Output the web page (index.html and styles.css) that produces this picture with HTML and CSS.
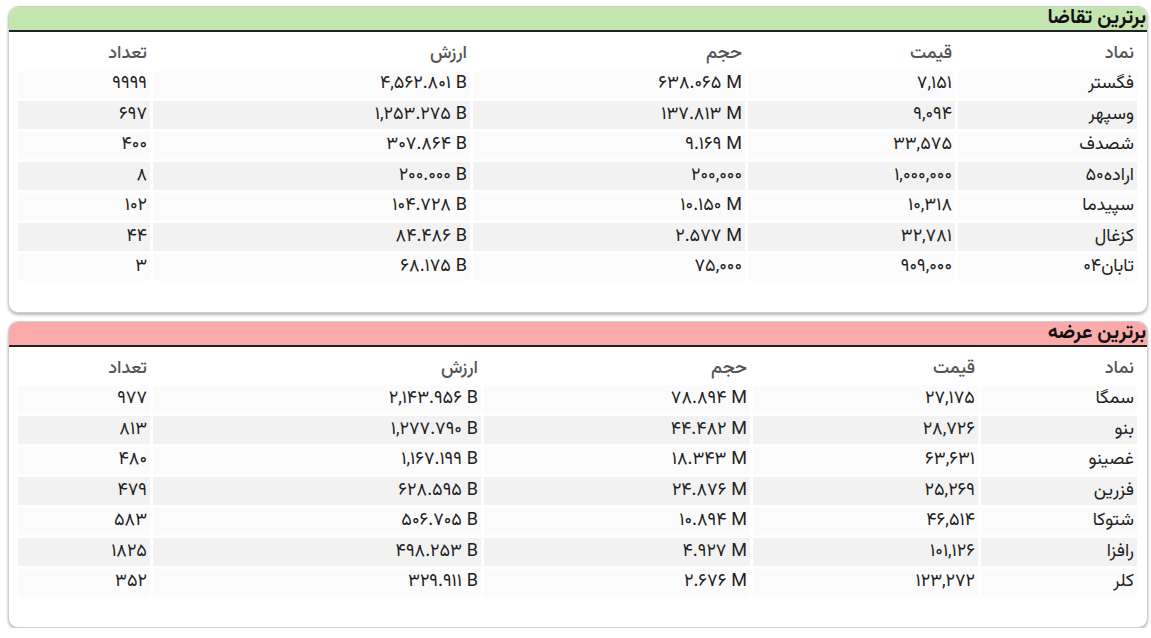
FILE: index.html
```html
<!DOCTYPE html>
<html lang="fa" dir="rtl">
<head>
<meta charset="utf-8">
<title>برترین تقاضا و عرضه</title>
<link rel="stylesheet" href="styles.css">
</head>
<body>
<section class="card">
  <h2 class="card-title demand">برترین تقاضا</h2>
  <table class="grid grid-demand">
    <colgroup><col class="c-sym"><col class="c-price"><col class="c-vol"><col class="c-val"><col class="c-cnt"></colgroup>
    <thead>
      <tr><th>نماد</th><th>قیمت</th><th>حجم</th><th>ارزش</th><th>تعداد</th></tr>
    </thead>
    <tbody>
      <tr><td>فگستر</td><td>۷,۱۵۱</td><td><span class="num">۶۳۸.۰۶۵ M</span></td><td><span class="num">۴,۵۶۲.۸۰۱ B</span></td><td>۹۹۹۹</td></tr>
      <tr><td>وسپهر</td><td>۹,۰۹۴</td><td><span class="num">۱۳۷.۸۱۳ M</span></td><td><span class="num">۱,۲۵۳.۲۷۵ B</span></td><td>۶۹۷</td></tr>
      <tr><td>شصدف</td><td>۳۳,۵۷۵</td><td><span class="num">۹.۱۶۹ M</span></td><td><span class="num">۳۰۷.۸۶۴ B</span></td><td>۴۰۰</td></tr>
      <tr><td>اراده۵۰</td><td>۱,۰۰۰,۰۰۰</td><td><span class="num">۲۰۰,۰۰۰</span></td><td><span class="num">۲۰۰.۰۰۰ B</span></td><td>۸</td></tr>
      <tr><td>سپیدما</td><td>۱۰,۳۱۸</td><td><span class="num">۱۰.۱۵۰ M</span></td><td><span class="num">۱۰۴.۷۲۸ B</span></td><td>۱۰۲</td></tr>
      <tr><td>کزغال</td><td>۳۲,۷۸۱</td><td><span class="num">۲.۵۷۷ M</span></td><td><span class="num">۸۴.۴۸۶ B</span></td><td>۴۴</td></tr>
      <tr><td>تابان۰۴</td><td>۹۰۹,۰۰۰</td><td><span class="num">۷۵,۰۰۰</span></td><td><span class="num">۶۸.۱۷۵ B</span></td><td>۳</td></tr>
    </tbody>
  </table>
</section>
<section class="card">
  <h2 class="card-title supply">برترین عرضه</h2>
  <table class="grid grid-supply">
    <colgroup><col class="c-sym"><col class="c-price"><col class="c-vol"><col class="c-val"><col class="c-cnt"></colgroup>
    <thead>
      <tr><th>نماد</th><th>قیمت</th><th>حجم</th><th>ارزش</th><th>تعداد</th></tr>
    </thead>
    <tbody>
      <tr><td>سمگا</td><td>۲۷,۱۷۵</td><td><span class="num">۷۸.۸۹۴ M</span></td><td><span class="num">۲,۱۴۳.۹۵۶ B</span></td><td>۹۷۷</td></tr>
      <tr><td>بنو</td><td>۲۸,۷۲۶</td><td><span class="num">۴۴.۴۸۲ M</span></td><td><span class="num">۱,۲۷۷.۷۹۰ B</span></td><td>۸۱۳</td></tr>
      <tr><td>غصینو</td><td>۶۳,۶۳۱</td><td><span class="num">۱۸.۳۴۳ M</span></td><td><span class="num">۱,۱۶۷.۱۹۹ B</span></td><td>۴۸۰</td></tr>
      <tr><td>فزرین</td><td>۲۵,۲۶۹</td><td><span class="num">۲۴.۸۷۶ M</span></td><td><span class="num">۶۲۸.۵۹۵ B</span></td><td>۴۷۹</td></tr>
      <tr><td>شتوکا</td><td>۴۶,۵۱۴</td><td><span class="num">۱۰.۸۹۴ M</span></td><td><span class="num">۵۰۶.۷۰۵ B</span></td><td>۵۸۳</td></tr>
      <tr><td>رافزا</td><td>۱۰۱,۱۲۶</td><td><span class="num">۴.۹۲۷ M</span></td><td><span class="num">۴۹۸.۲۵۳ B</span></td><td>۱۸۲۵</td></tr>
      <tr><td>کلر</td><td>۱۲۳,۲۷۲</td><td><span class="num">۲.۶۷۶ M</span></td><td><span class="num">۳۲۹.۹۱۱ B</span></td><td>۳۵۲</td></tr>
    </tbody>
  </table>
</section>
</body>
</html>
```

FILE: styles.css
```css
* { box-sizing: border-box; }
html, body { margin: 0; padding: 0; background: #fff; }
body {
  padding: 6px 3px 0 8px;
  font-family: "Vazirmatn", "Noto Sans Arabic", "DejaVu Sans", sans-serif;
  color: #222;
  display: flex;
  flex-direction: column;
  gap: 8px;
}
.card {
  background: #fff;
  border: 1px solid #cfcfcf;
  border-radius: 10px;
  box-shadow: 0 2px 3px rgba(0, 0, 0, 0.28);
  padding-bottom: 28px;
}
.card-title {
  margin: 0;
  height: 25px;
  line-height: 23px;
  font-size: 20px;
  font-weight: bold;
  color: #111;
  padding: 0 1px;
  border-bottom: 2px solid #222;
  border-radius: 9px 9px 0 0;
}
.demand { background: #c3e6b1; }
.supply { background: #fbaaaa; }
.grid {
  table-layout: fixed;
  border-collapse: separate;
  border-spacing: 3px;
  margin: 5px 7px 0 6px;
  width: 1125px;
  font-size: 18px;
}
.grid th, .grid td {
  height: 27.5px;
  line-height: 26px;
  padding: 0 3px;
  text-align: right;
  white-space: nowrap;
}
.grid th { font-weight: 500; color: #555; background: #fff; }
.grid tbody tr:nth-child(odd) td { background: #fbfbfb; }
.grid tbody tr:nth-child(even) td { background: #f2f2f2; }
.num { direction: ltr; unicode-bidi: isolate; display: inline-block; }

.grid-demand .c-sym { width: 179px; }
.grid-demand .c-price { width: 207px; }
.grid-demand .c-vol { width: 272px; }
.grid-demand .c-val { width: 317px; }
.grid-demand .c-cnt { width: 132px; }

.grid-supply .c-sym { width: 156px; }
.grid-supply .c-price { width: 225px; }
.grid-supply .c-vol { width: 266px; }
.grid-supply .c-val { width: 328px; }
.grid-supply .c-cnt { width: 132px; }
```
